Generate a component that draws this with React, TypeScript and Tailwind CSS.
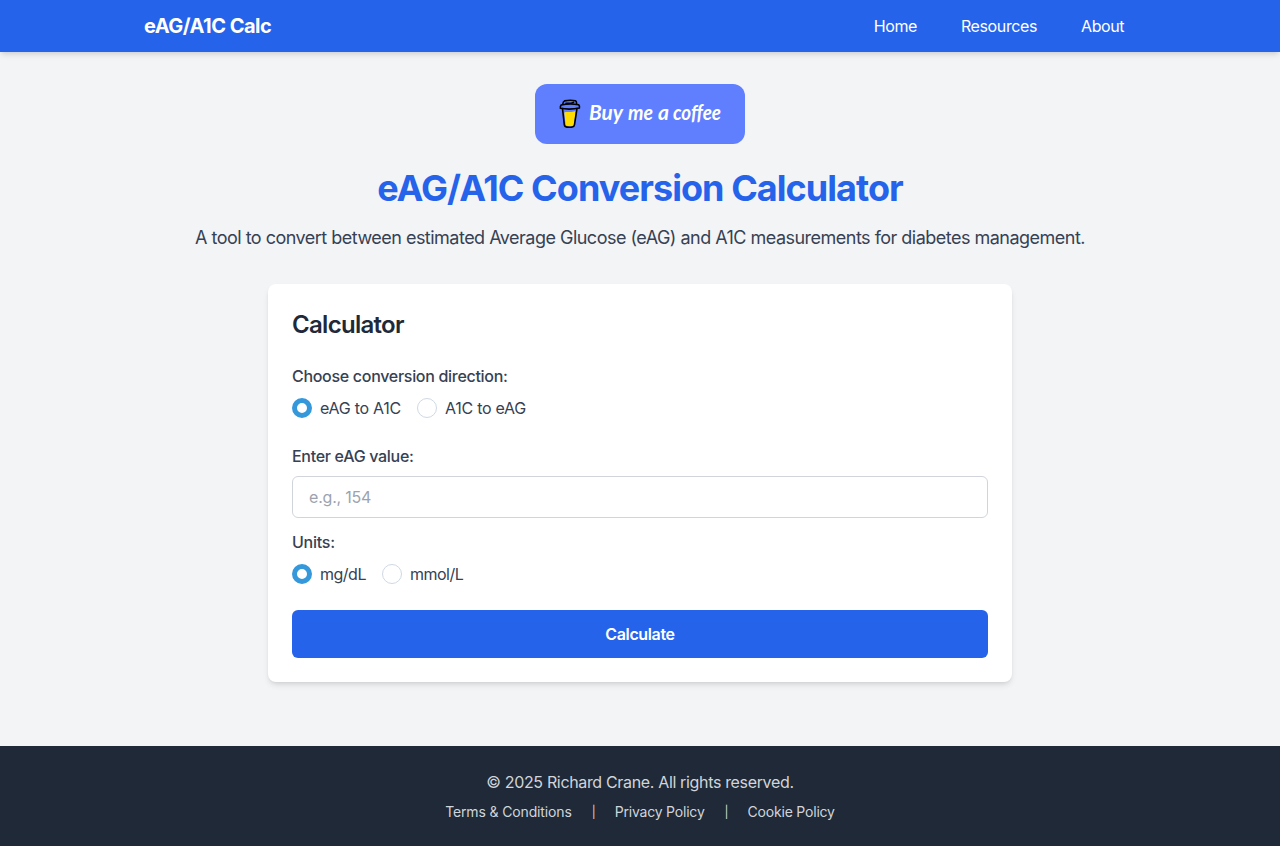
function Radio({
  name,
  label,
  labelClass,
  checked = false,
}: {
  name: string;
  label: string;
  labelClass: string;
  checked?: boolean;
}) {
  return (
    <label className="flex items-center">
      <input
        type="radio"
        name={name}
        defaultChecked={checked}
        className="h-5 w-5 appearance-none rounded-full border border-[#cfd9e4] bg-white checked:border-[5px] checked:border-[#3498db]"
      />
      <span className={labelClass}>{label}</span>
    </label>
  );
}

function CoffeeCup() {
  return (
    <svg width="22" height="30" viewBox="0 0 22 30" fill="none">
      <path d="M5.300 13.500c3-1.500 6 .5 11.200-1.500l-1.500 14.500c-2.500 1-5.500 1-8.300 0z" fill="#FFDD00" />
      <path d="M3.500 9.500l1.800 16.200c.2 1.700 1 2.300 2.500 2.400 2 .2 4 .2 5.500-.1 1.500-.2 2-1 2.200-2.400L18 9.500" stroke="#000" strokeWidth="1.600" strokeLinecap="round" />
      <path d="M2.100 6c5.500-1.200 12.500-1.200 17.600-.2.700.8 1 2 .7 3.200-5.500 1.200-13.500 1.300-19 .3-.2-1.200 0-2.400.7-3.300z" stroke="#000" strokeWidth="1.600" strokeLinejoin="round" />
      <path d="M3.800 5c.2-1.500.8-2.800 1.700-3.100 3.500-.8 7.500-.8 11-.2.800.4 1.100 1.700 1.100 3M7 4.200c3 .4 5 .2 7.500-.8" stroke="#000" strokeWidth="1.600" strokeLinecap="round" />
    </svg>
  );
}

export default function App() {
  return (
    <div className="flex min-h-screen flex-col bg-gray-100 font-['Inter',sans-serif] text-base tracking-[-0.44px] text-gray-700">
      <header className="flex h-[52px] items-center justify-between bg-[#2563eb] pr-39 pl-36 text-white shadow-md">
        <a className="text-xl font-bold tracking-[-0.5px]">eAG/A1C Calc</a>
        <nav className="flex gap-11">
          <a>Home</a>
          <a className="tracking-[-0.38px]">Resources</a>
          <a>About</a>
        </nav>
      </header>
      <main className="flex grow flex-col items-center pt-8">
        <a className="flex h-[60px] w-[210px] items-center rounded-xl bg-[#5f7fff] pl-6 text-white">
          <CoffeeCup />
          <svg width="140" height="44" className="ml-1 overflow-visible tracking-normal">
            <text
              y="28"
              fill="#fff"
              className="font-['Lato',sans-serif] text-[21px] font-bold italic"
            >
              <tspan x="4" textLength="34" lengthAdjust="spacingAndGlyphs">Buy</tspan>
              <tspan x="43" textLength="25" lengthAdjust="spacingAndGlyphs">me</tspan>
              <tspan x="73" textLength="11" lengthAdjust="spacingAndGlyphs">a</tspan>
              <tspan x="88" textLength="48" lengthAdjust="spacingAndGlyphs">coffee</tspan>
            </text>
          </svg>
        </a>
        <h1 className="mt-6 text-4xl font-bold tracking-[-0.95px] text-[#2563eb]">eAG/A1C Conversion Calculator</h1>
        <p className="mt-4 text-lg tracking-[-0.515px]">
          A tool to convert between estimated Average Glucose (eAG) and A1C measurements for diabetes management.
        </p>
        <section className="mt-8 w-[744px] rounded-lg bg-white p-6 shadow-md">
          <h2 className="pt-px text-2xl font-semibold tracking-[-0.7px] text-gray-800">Calculator</h2>
          <p className="mt-[23px] font-medium tracking-[-0.3px]">Choose conversion direction:</p>
          <div className="mt-2 flex gap-4">
            <Radio name="direction" label="eAG to A1C" labelClass="ml-2 tracking-[-0.26px]" checked />
            <Radio name="direction" label="A1C to eAG" labelClass="ml-2 tracking-[-0.26px]" />
          </div>
          <label className="mt-6 block font-medium tracking-[-0.3px]" htmlFor="value">Enter eAG value:</label>
          <input
            id="value"
            placeholder="e.g., 154"
            className="mt-2 block h-[42px] w-full rounded-md border border-[#d1d5db] px-4 tracking-[-0.2px] placeholder:text-[#9ca3af]"
          />
          <p className="mt-3 font-medium tracking-[-0.24px]">Units:</p>
          <div className="mt-2 flex gap-4">
            <Radio name="units" label="mg/dL" labelClass="ml-2 tracking-[-0.5px]" checked />
            <Radio name="units" label="mmol/L" labelClass="ml-2 tracking-[-0.5px]" />
          </div>
          <button className="mt-6 block h-12 w-full rounded-md bg-[#2563eb] font-semibold tracking-[-0.36px] text-white">Calculate</button>
        </section>
      </main>
      <footer className="flex h-[100px] flex-col items-center bg-[#1f2937] pt-6 text-[#d1d5db]">
        <p className="tracking-[-0.34px]">© 2025 Richard Crane. All rights reserved.</p>
        <div className="mt-2 flex gap-5 text-sm tracking-[-0.2px]">
          <a className="tracking-[-0.14px]">Terms &amp; Conditions</a>
          <span className="w-[3px] text-center text-xs leading-5">|</span>
          <a>Privacy Policy</a>
          <span className="w-[3px] text-center text-xs leading-5">|</span>
          <a>Cookie Policy</a>
        </div>
      </footer>
    </div>
  );
}
